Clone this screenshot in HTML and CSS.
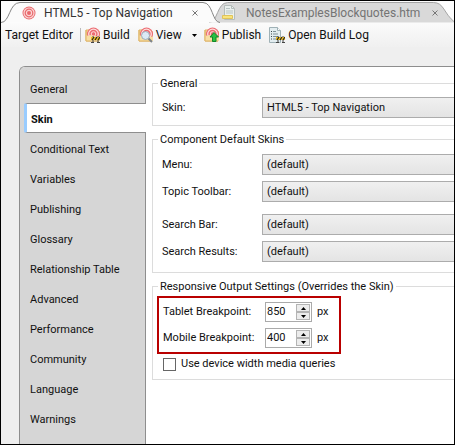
FILE: index.html
```html
<!DOCTYPE html>
<html lang="en">
<head>
<meta charset="utf-8">
<title>Target Editor</title>
<link rel="stylesheet" href="styles.css">
</head>
<body>
<svg class="defs" aria-hidden="true">
  <symbol id="target" viewBox="0 0 14 14">
    <circle cx="7" cy="7" r="6.5" fill="#e8686c"/>
    <circle cx="7" cy="7" r="5" fill="none" stroke="#fbd5d4" stroke-width="1.2"/>
    <circle cx="7" cy="7" r="2.6" fill="none" stroke="#fbd5d4" stroke-width="1.2"/>
  </symbol>
  <symbol id="folder" viewBox="0 0 16 16">
    <path d="M1 3h4l1 1h8v10H1z" fill="#f7dfa0" stroke="#dfb467"/>
    <circle cx="8.500" cy="7" r="6.500" fill="#ec6a70"/>
    <circle cx="8.500" cy="7" r="4.800" fill="none" stroke="#fde0df" stroke-width="1.300"/>
    <circle cx="8.500" cy="7" r="2.300" fill="#ec6a70" stroke="#fde0df"/>
    <path d="M1 8l2 1 2-1 10 2v4H1z" fill="#f8dfa4"/>
    <path d="M1 14V3M1 14h13" fill="none" stroke="#dfb467"/>
  </symbol>
  <symbol id="barrier" viewBox="0 0 9 7">
    <path d="M2 0v7M7 0v7M0 6.500h3M6 6.500h3" stroke="#444" stroke-width="1"/>
    <path d="M0 1h9v3H0z" fill="#edbd27"/>
    <path d="M1 4l2-3M4 4l2-3M7 4l2-3" stroke="#222" stroke-width="1.200"/>
  </symbol>
  <symbol id="page" viewBox="0 0 12 16">
    <path d="M.5.500h8l3 3v12H.5z" fill="#e3edf0" stroke="#9fb1b6"/>
    <path d="M8.500.500v3h3" fill="#fff" stroke="#9fb1b6"/>
    <path d="M4 4.500h3M4 7h5M4 9.500h5M4 12h5" stroke="#7e9298"/>
    <path d="M2 4.500h1M2 7h1M2 9.500h1M2 12h1" stroke="#39474c"/>
  </symbol>
</svg>
<div class="window">
  <div class="tabs" role="tablist">
    <div class="tab tab-active">
      <svg class="tab-shape" viewBox="0 0 220 22" preserveAspectRatio="none" aria-hidden="true"><path d="M0 21.500C9 21.500 8 1.500 19 1.500H202C212 1.500 211 21.500 219 21.500" fill="#fbfbfb" stroke="#858585"/></svg>
      <svg class="tab-icon" viewBox="0 0 14 14" aria-hidden="true"><use href="#target"/></svg>
      <button class="tab-name" role="tab" aria-selected="true">HTML5 - Top Navigation</button>
      <button class="close" aria-label="Close HTML5 - Top Navigation"><svg viewBox="0 0 6 6"><path d="M.5.500l5 5M5.500.500l-5 5"/></svg></button>
    </div>
    <div class="tab tab-back">
      <svg class="tab-shape" viewBox="0 0 250 22" preserveAspectRatio="none" aria-hidden="true"><path d="M0 21.500C9 21.500 8 1.500 19 1.500H228C239 1.500 238 12 250 21.500" fill="#d9d9d9" stroke="#a3a3a3"/></svg>
      <svg class="doc-icon" viewBox="0 0 14 16" aria-hidden="true"><path d="M2.500.500h7l3 3v11h-10z" fill="#eaf0ee" stroke="#b5bdbb"/><path d="M9.500.500v3h3" fill="none" stroke="#b5bdbb"/><path d="M4 3.500h4M4 6h7M4 8h7" stroke="#b7c3c3"/><path d="M.5 10.500h10v3H.5z" fill="#f8e47c" stroke="#dfc35b"/></svg>
      <button class="tab-name" role="tab" aria-selected="false">NotesExamplesBlockquotes.htm</button>
      <button class="close" aria-label="Close NotesExamplesBlockquotes.htm"><svg viewBox="0 0 6 6"><path d="M.5.500l5 5M5.500.500l-5 5"/></svg></button>
    </div>
  </div>
  <div class="toolbar" role="toolbar" aria-label="Target Editor">
    <span class="title">Target Editor</span>
    <button class="tool"><svg viewBox="0 0 16 16" aria-hidden="true"><use href="#folder" width="16" height="16"/><use href="#barrier" x="6" y="9" width="9" height="7"/></svg>Build</button>
    <button class="tool tool-view"><svg viewBox="0 0 16 16" aria-hidden="true"><use href="#folder" width="16" height="16"/><path d="M10 11l4 4" stroke="#7d8389" stroke-width="2"/><circle cx="7.500" cy="8.500" r="4" fill="#dbeaf5" stroke="#9aabb8"/></svg>View</button>
    <button class="more" aria-label="View options"><svg viewBox="0 0 5 3"><path d="M0 0h5L2.500 3z"/></svg></button>
    <button class="tool"><svg viewBox="0 0 16 16" aria-hidden="true"><use href="#folder" width="16" height="16"/><path d="M10 5.500l4.500 4.500H12v4.500H8.500V10H6z" fill="#27c043" stroke="#108729"/></svg>Publish</button>
    <button class="tool tool-log"><svg viewBox="0 0 16 16" aria-hidden="true"><use href="#page" width="12" height="16"/><use href="#barrier" x="7" y="9" width="9" height="7"/></svg>Open Build Log</button>
  </div>
  <div class="panel">
    <nav class="side">
      <a href="#general">General</a>
      <a href="#skin" class="current" aria-current="page">Skin</a>
      <a href="#conditional">Conditional Text</a>
      <a href="#variables">Variables</a>
      <a href="#publishing">Publishing</a>
      <a href="#glossary">Glossary</a>
      <a href="#relationship">Relationship Table</a>
      <a href="#advanced">Advanced</a>
      <a href="#performance">Performance</a>
      <a href="#community">Community</a>
      <a href="#language">Language</a>
      <a href="#warnings">Warnings</a>
    </nav>
    <form class="form">
      <fieldset>
        <legend>General</legend>
        <div class="row"><label for="skin">Skin:</label><select id="skin"><option>HTML5 - Top Navigation</option></select></div>
      </fieldset>
      <fieldset class="components">
        <legend>Component Default Skins</legend>
        <div class="group">
          <div class="row"><label for="menu">Menu:</label><select id="menu"><option>(default)</option></select></div>
          <div class="row"><label for="topic">Topic Toolbar:</label><select id="topic"><option>(default)</option></select></div>
        </div>
        <div class="group">
          <div class="row"><label for="bar">Search Bar:</label><select id="bar"><option>(default)</option></select></div>
          <div class="row"><label for="results">Search Results:</label><select id="results"><option>(default)</option></select></div>
        </div>
      </fieldset>
      <fieldset class="responsive">
        <legend>Responsive Output Settings (Overrides the Skin)</legend>
        <div class="callout">
          <div class="break"><label for="tablet">Tablet Breakpoint:</label>
            <span class="spin"><input id="tablet" type="number" value="850"><span class="steps"><button type="button" aria-label="Increase tablet breakpoint"><svg viewBox="0 0 5 3"><path d="M0 3h5L2.500 0z"/></svg></button><button type="button" aria-label="Decrease tablet breakpoint"><svg viewBox="0 0 5 3"><path d="M0 0h5L2.500 3z"/></svg></button></span></span>px</div>
          <div class="break"><label for="mobile">Mobile Breakpoint:</label>
            <span class="spin"><input id="mobile" type="number" value="400"><span class="steps"><button type="button" aria-label="Increase mobile breakpoint"><svg viewBox="0 0 5 3"><path d="M0 3h5L2.500 0z"/></svg></button><button type="button" aria-label="Decrease mobile breakpoint"><svg viewBox="0 0 5 3"><path d="M0 0h5L2.500 3z"/></svg></button></span></span>px</div>
        </div>
        <label class="check"><input type="checkbox">Use device width media queries</label>
      </fieldset>
    </form>
  </div>
</div>
</body>
</html>
```
FILE: styles.css
```css
* { box-sizing: border-box; }
body { margin: 0; font: 11px/14px Roboto, sans-serif; color: #111; }
button, input, select { font: inherit; color: inherit; margin: 0; }
button { border: 0; padding: 0; background: none; }
svg { display: block; flex: none; }
.defs { position: absolute; width: 0; height: 0; }

.window {
  display: flex;
  flex-direction: column;
  min-height: 100vh;
  border: 1px solid #000;
  background: #efefef;
  overflow: hidden;
}

.tabs { display: flex; height: 22px; background: #fdfdfd; font-size: 12px; }
.tab { position: relative; display: flex; align-items: center; flex: none; height: 22px; padding-top: 2px; }
.tab-active { z-index: 1; width: 220px; padding-left: 21px; color: #333; }
.tab-back { width: 246px; margin-left: -12px; padding-left: 13px; color: #747474; }
.tab-shape { position: absolute; inset: 0; width: 100%; height: 22px; }
.tab-icon { position: relative; width: 14px; height: 14px; margin-right: 8px; }
.doc-icon { position: relative; width: 14px; height: 16px; margin-right: 10px; }
.tab-name { position: relative; white-space: nowrap; }
.close { position: absolute; top: 9px; right: 23px; }
.tab-back .close { right: 17px; }
.close svg { width: 6px; height: 6px; stroke: #777; fill: none; }

.toolbar {
  display: flex;
  align-items: center;
  height: 24px;
  padding-left: 4px;
  background: linear-gradient(#fbfbfb, #f0f0f0);
  font-size: 12px;
  white-space: nowrap;
}
.title { width: 76px; margin-right: 4px; border-right: 1px solid #bbb; }
.tool { display: flex; align-items: center; gap: 2px; margin-right: 8px; }
.tool svg { width: 16px; height: 16px; }
.tool-log { gap: 3px; }
.more { padding: 0 7px 0 2px; }
.more svg { width: 5px; height: 3px; }

.panel {
  display: flex;
  flex: 1;
  margin: 19px 0 0 18px;
  border: 1px solid #8e8e8e;
  border-width: 1px 0 0 1px;
  border-radius: 6px 0 0 0;
  background: #fff;
  overflow: hidden;
}
.side { flex: none; width: 126px; padding: 6px 0 0 4px; background: linear-gradient(#8e8e8e, #8e8e8e) right / 1px 100% no-repeat #d6d6d6; }
.side a { display: flex; align-items: center; height: 30px; padding: 3px 0 0 6px; color: inherit; text-decoration: none; }
.side .current {
  padding-left: 4px;
  border: 1px solid #8e8e8e;
  border-width: 1px 0 1px 0;
  border-left: 3px solid #99ccff;
  border-radius: 2px 0 0 2px;
  background: #fff;
  font-weight: bold;
}

.form { flex: 1; min-width: 0; padding: 9px 0 0 6px; }
fieldset { min-width: 0; margin: 0 0 6px; padding: 6px 0 7px 9px; border: 1px solid #dcdcdc; border-right: 0; }
legend { margin-left: -4px; padding: 1px 2px 0; line-height: 14px; }
.row { display: flex; align-items: center; }
.row label { flex: none; width: 100px; padding-top: 1px; }
.group .row + .row { margin-top: 6px; }
.group + .group { margin-top: 12px; }
.components { padding: 7px 0 10px 9px; }
select {
  appearance: none;
  flex: 1;
  min-width: 0;
  height: 21px;
  padding: 1px 4px 0;
  border: 1px solid #acacac;
  border-right: 0;
  border-radius: 0;
  background: linear-gradient(#f0f0f0, #e4e4e4);
}

.responsive { padding: 2px 0 8px 4px; }
.responsive legend { margin-left: 1px; }
.callout { width: 184px; padding: 4px; border: 2px solid #b90000; }
.break { display: flex; align-items: center; height: 20px; }
.break + .break { margin-top: 6px; }
.break label { flex: none; width: 102px; }
.spin { display: flex; width: 47px; height: 20px; margin-right: 5px; padding: 1px; border: 1px solid #aaa; background: #fff; }
.spin input { flex: 1; min-width: 0; padding: 0; border: 0; outline: 0; background: none; appearance: textfield; }
.spin input::-webkit-inner-spin-button { display: none; }
.steps { display: grid; width: 14px; }
.steps button { display: grid; place-items: center; border: 1px solid #b4b4b4; background: #ececec; }
.steps svg { width: 5px; height: 3px; }
.check { display: flex; align-items: center; gap: 5px; margin: 3px 0 0 6px; }
.check input { appearance: none; width: 13px; height: 13px; border: 1px solid #666; background: #fff; }
```
